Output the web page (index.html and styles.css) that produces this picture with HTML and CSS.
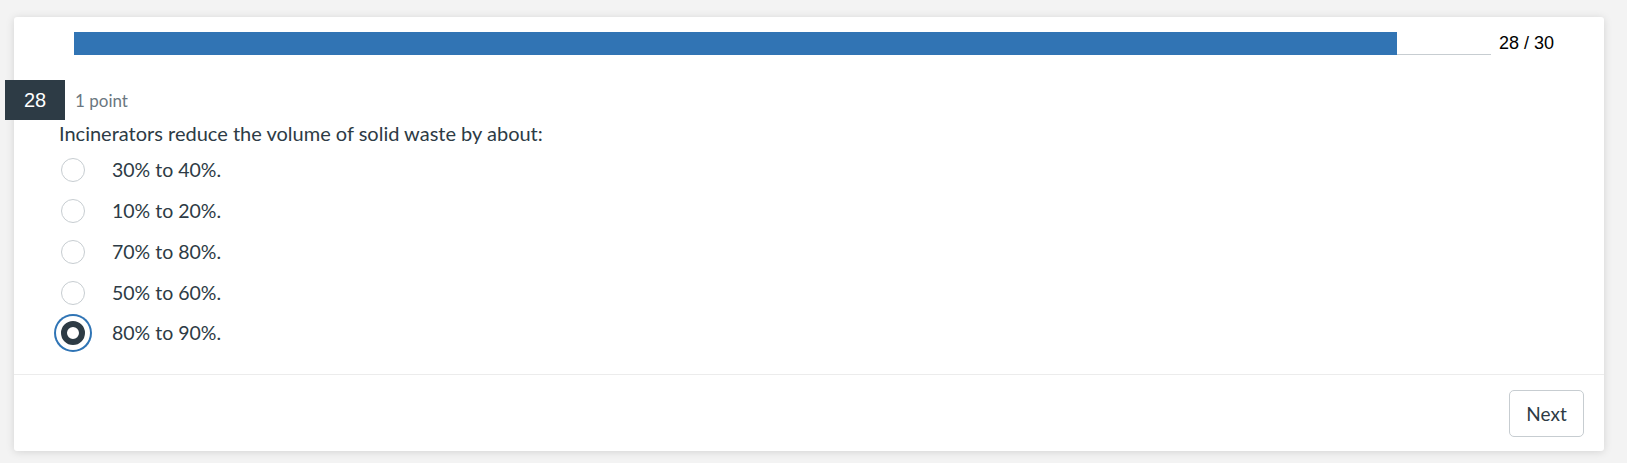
FILE: index.html
```html
<!DOCTYPE html>
<html lang="en">
<head>
<meta charset="utf-8">
<title>Quiz</title>
<link rel="stylesheet" href="styles.css">
</head>
<body>
<div class="card">
  <div class="progress-row">
    <div class="track"><div class="fill" style="width:93.37%"></div></div>
    <span class="count">28 / 30</span>
  </div>
  <div class="question">
    <div class="qhead">
      <span class="badge">28</span>
      <span class="points">1 point</span>
    </div>
    <p class="qtext">Incinerators reduce the volume of solid waste by about:</p>
    <ul class="options">
      <li class="option"><span class="radio"></span><span class="label">30% to 40%.</span></li>
      <li class="option"><span class="radio"></span><span class="label">10% to 20%.</span></li>
      <li class="option"><span class="radio"></span><span class="label">70% to 80%.</span></li>
      <li class="option"><span class="radio"></span><span class="label">50% to 60%.</span></li>
      <li class="option"><span class="radio checked"></span><span class="label">80% to 90%.</span></li>
    </ul>
  </div>
  <div class="footer">
    <button class="next" type="button">Next</button>
  </div>
</div>
</body>
</html>
```
FILE: styles.css
```css
html, body {
  margin: 0;
  padding: 0;
}
body {
  background: #f3f3f3;
  font-family: Lato, "Liberation Sans", sans-serif;
  color: #2d3b45;
  padding: 17px 23px 13px 14px;
}
.card {
  background: #fff;
  border-radius: 3px;
  box-shadow: 0 1px 8px rgba(0, 0, 0, 0.13);
}
.progress-row {
  display: flex;
  align-items: center;
  padding: 15px 52px 0 60px;
  gap: 8px;
}
.track {
  flex: 1;
  height: 22px;
  border-bottom: 1px solid #c7cdd1;
  display: flex;
}
.fill {
  height: 23px;
  background: #3174b4;
}
.count {
  font-family: "Liberation Sans", Arial, sans-serif;
  font-size: 18px;
  line-height: 23px;
  color: #000;
  width: 53px;
  white-space: nowrap;
}
.question {
  padding: 25px 0 20px 0;
}
.qhead {
  display: flex;
  align-items: center;
  gap: 10px;
  margin-left: -9px;
}
.badge {
  width: 60px;
  height: 40px;
  background: #2d3b45;
  color: #fff;
  font-family: "Liberation Sans", Arial, sans-serif;
  font-size: 20px;
  display: flex;
  align-items: center;
  justify-content: center;
}
.points {
  font-size: 17px;
  color: #6b7780;
}
.qtext {
  margin: 0;
  padding-left: 45px;
  font-size: 20px;
  line-height: 26px;
}
.options {
  list-style: none;
  margin: 4px 0 0 0;
  padding: 0 0 0 47px;
}
.option {
  display: flex;
  align-items: center;
  height: 40.75px;
  gap: 27px;
}
.radio {
  width: 24px;
  height: 24px;
  box-sizing: border-box;
  border-radius: 50%;
  border: 1px solid #c7cdd1;
  background: #fff;
  flex: none;
}
.radio.checked {
  border: 6px solid #2d3b45;
  box-shadow: 0 0 0 5px #fff, 0 0 0 7px #2f74b5;
}
.label {
  font-size: 19.5px;
  line-height: 22px;
}
.footer {
  border-top: 1px solid #ececec;
  display: flex;
  justify-content: flex-end;
  padding: 15px 20px 14px 0;
}
.next {
  height: 47px;
  width: 75px;
  background: #fff;
  border: 1px solid #c7cdd1;
  border-radius: 5px;
  font-family: Lato, "Liberation Sans", sans-serif;
  font-size: 19px;
  color: #2d3b45;
  padding: 0;
}
```
